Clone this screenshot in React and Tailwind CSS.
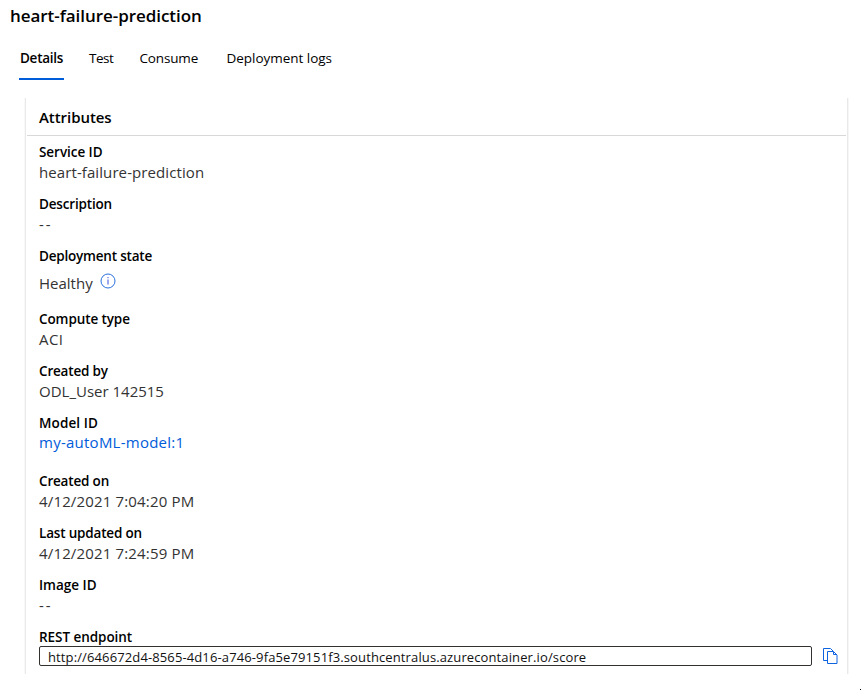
function InfoIcon() {
  return (
    <svg className="mt-[7px] ml-[7.3px] block" width="16" height="16" viewBox="0 0 16 16" fill="none">
      <circle cx="8" cy="8" r="7" stroke="#2a6fdc" strokeWidth="1" />
      <rect x="7.5" y="4" width="1" height="1.2" fill="#3a52dc" />
      <rect x="7.5" y="6.5" width="1" height="5" fill="#3a52dc" />
    </svg>
  );
}

function CopyIcon() {
  return (
    <svg className="ml-[11px] block" width="15" height="16" viewBox="0 0 15 16" fill="none" stroke="#0f62e0" strokeWidth="1">
      <path d="M4 12.5H0.5V0.5H7.5L10 3" />
      <path d="M4.5 3.5H10.5L14 7V15.5H4.5Z" />
      <path d="M10.5 3.5V6.5H14" />
    </svg>
  );
}

function Field({ label, track = 'tracking-[-0.05px]', children, className = 'h-[52px]' }) {
  return (
    <div className={className}>
      <div className={`h-5 text-[13.5px] leading-5 font-semibold text-black ${track}`}>{label}</div>
      {children}
    </div>
  );
}

function Value({ track = '', color = 'text-[#333333]', children }) {
  return <div className={`h-5 text-[15px] leading-5 ${color} ${track}`}>{children}</div>;
}

export default function App() {
  return (
    <div className="h-[690px] w-[861px] overflow-hidden bg-white font-['Open_Sans','Noto_Sans',sans-serif] whitespace-nowrap text-black">
      <h1 className="h-8 pl-[10px] text-[17px] leading-8 font-semibold tracking-[-0.05px]">heart-failure-prediction</h1>

      <nav className="flex h-12 pl-[19px] text-[13.5px] leading-[20px]">
        <div className="h-12 w-[45px] border-b-2 border-[#015cda] pt-4 pl-px font-semibold tracking-[-0.27px]">Details</div>
        <div className="w-[50px] pt-4 pl-[25px] tracking-[-0.5px]">Test</div>
        <div className="w-[87px] pt-4 pl-[25.5px] tracking-[-0.15px]">Consume</div>
        <div className="pt-4 pl-[25.5px] tracking-[-0.03px]">Deployment logs</div>
      </nav>

      <section className="mt-[18px] ml-[25px] h-[576px] w-[823px] border-x border-[#e9e9e9] shadow-[1px_0_0_#f6f6f6,-1px_0_0_#f9f9f9]">
        <h2 className="mx-px h-[38px] border-b border-[#d8d8d8] pl-[12px] text-[15px] leading-[38px] font-semibold tracking-[-0.06px]">Attributes</h2>
        <div className="pt-[6px] pl-[13px]">
          <Field label="Service ID">
            <Value track="tracking-[0.09px]">heart-failure-prediction</Value>
          </Field>
          <Field label="Description" track="tracking-[-0.17px]">
            <Value track="tracking-[2px]">--</Value>
          </Field>
          <Field label="Deployment state" track="tracking-[-0.2px]" className="h-[63px]">
            <div className="flex h-[31px]">
              <div className="pt-[7px] text-[15px] leading-5 text-[#333333]">Healthy</div>
              <InfoIcon />
            </div>
          </Field>
          <Field label="Compute type" track="tracking-[-0.1px]">
            <Value track="tracking-[0.4px]">ACI</Value>
          </Field>
          <Field label="Created by" track="tracking-[-0.18px]">
            <Value>ODL_User 142515</Value>
          </Field>
          <Field label="Model ID" track="tracking-[0.1px]" className="h-[58px]">
            <div className="-mt-px">
              <Value color="text-[#015cda]" track="tracking-[0.25px]">my-autoML-model:1</Value>
            </div>
          </Field>
          <Field label="Created on" track="tracking-[-0.18px]">
            <Value track="tracking-[0.16px]">4/12/2021 7:04:20 PM</Value>
          </Field>
          <Field label="Last updated on" track="tracking-[-0.18px]">
            <Value track="tracking-[0.16px]">4/12/2021 7:24:59 PM</Value>
          </Field>
          <Field label="Image ID" track="tracking-[0px]">
            <Value track="tracking-[2px]">--</Value>
          </Field>
          <Field label="REST endpoint" className="h-[39px]">
            <div className="-mt-px flex items-center">
              <div className="h-5 w-[773px] rounded-[2px] border border-[#323130] pl-2 text-[13px] leading-[20px] tracking-[0.12px] text-[#111111]">
                http://646672d4-8565-4d16-a746-9fa5e79151f3.southcentralus.azurecontainer.io/score
              </div>
              <CopyIcon />
            </div>
          </Field>
        </div>
      </section>
      <div className="mt-[15px] ml-[860px] h-px w-px bg-black" />
    </div>
  );
}
